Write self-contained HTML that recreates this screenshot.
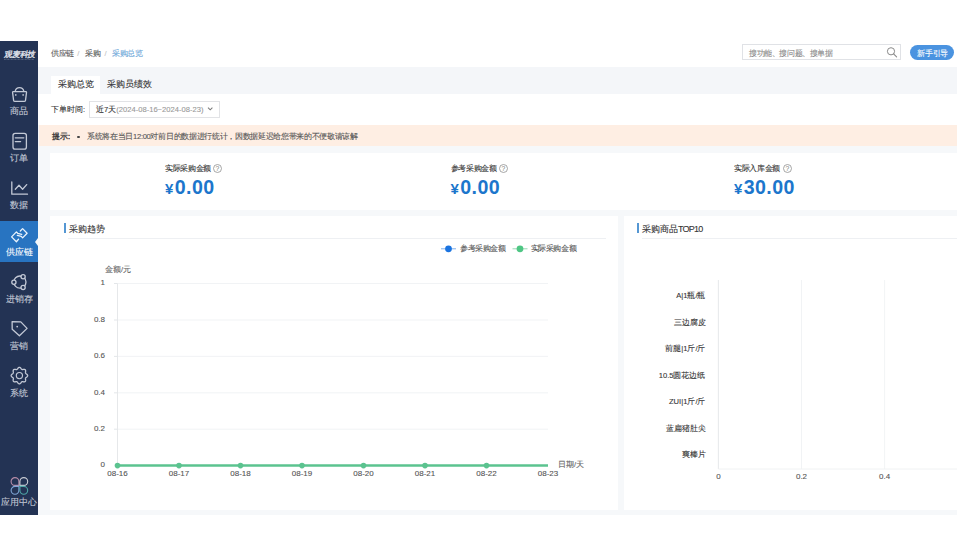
<!DOCTYPE html>
<html><head><meta charset="utf-8">
<style>
*{margin:0;padding:0;box-sizing:border-box}
html,body{width:957px;height:556px;overflow:hidden;background:#fff;font-family:"Liberation Sans",sans-serif;color:#333}
.t{position:absolute;white-space:nowrap;line-height:1;-webkit-text-stroke-width:0.1px}
.bx{position:absolute}
svg{position:absolute;overflow:visible}
.sl{left:0;width:38px;text-align:center;font-size:9px;color:#c3c9d6}
.yl{left:55px;width:50px;text-align:right;font-size:8px;color:#555}
.xl{width:40px;text-align:center;font-size:8px;color:#555}
.cl{left:605px;width:100.5px;text-align:right;font-size:7.6px;color:#333}
</style></head><body>
<!-- app frame -->
<div class="bx" style="left:0;top:41px;width:957px;height:474px;background:#f6f8fa"></div>
<!-- sidebar -->
<div class="bx" style="left:0;top:41px;width:38px;height:474px;background:#233354"></div>
<div class="bx" style="left:0;top:221px;width:38px;height:41px;background:#2874c1"></div>
<!-- header -->
<div class="bx" style="left:38px;top:41px;width:919px;height:26px;background:#fff"></div>
<div class="bx" style="left:38px;top:67px;width:919px;height:27px;background:#f4f6f9"></div>
<div class="bx" style="left:51px;top:76px;width:49px;height:18px;background:#fff"></div>
<div class="bx" style="left:38px;top:94px;width:919px;height:31px;background:#fff"></div>
<div class="bx" style="left:39px;top:124.7px;width:918px;height:21.8px;background:#feeee3"></div>
<!-- cards -->
<div class="bx" style="left:50.3px;top:153.3px;width:907px;height:56.4px;background:#fff"></div>
<div class="bx" style="left:50.3px;top:215.8px;width:567.7px;height:293.8px;background:#fff"></div>
<div class="bx" style="left:624px;top:215.8px;width:333px;height:293.8px;background:#fff"></div>

<!-- breadcrumb -->
<div class="t" style="left:51.3px;top:50px;font-size:7.6px;color:#555;letter-spacing:-0.5px">供应链</div>
<div class="t" style="left:77.3px;top:50px;font-size:7.6px;color:#c4c4c4">/</div>
<div class="t" style="left:85.2px;top:50px;font-size:7.6px;color:#555;letter-spacing:-0.5px">采购</div>
<div class="t" style="left:104.4px;top:50px;font-size:7.6px;color:#c4c4c4">/</div>
<div class="t" style="left:112.2px;top:50px;font-size:7.6px;color:#6aa5d8;letter-spacing:-0.5px">采购总览</div>
<!-- search -->
<div class="bx" style="left:742.2px;top:44.3px;width:158.4px;height:15.6px;border:1px solid #e0e2e6;background:#fff"></div>
<div class="t" style="left:749px;top:50px;font-size:7.6px;color:#8a8a8a;letter-spacing:-0.4px">搜功能、搜问题、搜单据</div>
<svg style="left:0;top:0" width="957" height="70" viewBox="0 0 957 70"><circle cx="891" cy="51.3" r="3.6" fill="none" stroke="#8a8a8a" stroke-width="1"/><line x1="893.6" y1="53.9" x2="896.6" y2="56.9" stroke="#8a8a8a" stroke-width="1.1" stroke-linecap="round"/></svg>
<div class="bx" style="left:910px;top:45px;width:44px;height:15px;border-radius:8px;background:#4a93e0"></div>
<div class="t" style="left:917.3px;top:49.8px;font-size:7.6px;color:#fff;letter-spacing:-0.35px">新手引导</div>

<!-- tabs -->
<div class="t" style="left:58px;top:80px;font-size:9px;color:#333">采购总览</div>
<div class="t" style="left:107px;top:80px;font-size:9px;color:#333">采购员绩效</div>

<!-- filter -->
<div class="t" style="left:51px;top:105.6px;font-size:7.6px;color:#333">下单时间:</div>
<div class="bx" style="left:89.2px;top:100.8px;width:131.3px;height:16.8px;border:1px solid #e2e3e6;background:#fff"></div>
<div class="t" style="left:96px;top:105.6px;font-size:7.6px;color:#333">近7天<span style="color:#999">(2024-08-16~2024-08-23)</span></div>
<svg style="left:0;top:0" width="957" height="130" viewBox="0 0 957 130"><polyline points="208,107.6 210.2,109.8 212.4,107.6" fill="none" stroke="#7a7a7a" stroke-width="1.05"/></svg>

<!-- notice -->
<div class="t" style="left:52px;top:133px;font-size:7.6px;color:#333;-webkit-text-stroke-width:0.3px">提示:</div>
<div class="bx" style="left:77.3px;top:135.8px;width:2.6px;height:2.6px;border-radius:50%;background:#444"></div>
<div class="t" style="left:87px;top:133.2px;font-size:7.6px;color:#555;letter-spacing:-0.32px">系统将在当日12:00对前日的数据进行统计，因数据延迟给您带来的不便敬请谅解</div>

<!-- stats -->
<div class="t" style="left:165px;top:164.8px;font-size:7.6px;color:#333;letter-spacing:-0.33px">实际采购金额</div>
<svg style="left:212.7px;top:163.5px" width="9" height="9" viewBox="0 0 9 9"><circle cx="4.5" cy="4.5" r="4" fill="none" stroke="#8a8a8a" stroke-width="0.75"/><text x="4.5" y="7.1" font-size="6.8" text-anchor="middle" fill="#7a7a7a" font-family="Liberation Sans">?</text></svg>
<div class="t" style="left:165px;top:178px;color:#1c76cc;font-weight:bold;-webkit-text-stroke-width:0"><span style="font-size:15px">¥</span><span style="font-size:19.6px;letter-spacing:0.45px;margin-left:1.3px">0.00</span></div>

<div class="t" style="left:450.5px;top:164.8px;font-size:7.6px;color:#333;letter-spacing:-0.33px">参考采购金额</div>
<svg style="left:498.7px;top:163.5px" width="9" height="9" viewBox="0 0 9 9"><circle cx="4.5" cy="4.5" r="4" fill="none" stroke="#8a8a8a" stroke-width="0.75"/><text x="4.5" y="7.1" font-size="6.8" text-anchor="middle" fill="#7a7a7a" font-family="Liberation Sans">?</text></svg>
<div class="t" style="left:450.5px;top:178px;color:#1c76cc;font-weight:bold;-webkit-text-stroke-width:0"><span style="font-size:15px">¥</span><span style="font-size:19.6px;letter-spacing:0.45px;margin-left:1.3px">0.00</span></div>

<div class="t" style="left:734px;top:164.8px;font-size:7.6px;color:#333;letter-spacing:-0.33px">实际入库金额</div>
<svg style="left:782.7px;top:163.5px" width="9" height="9" viewBox="0 0 9 9"><circle cx="4.5" cy="4.5" r="4" fill="none" stroke="#8a8a8a" stroke-width="0.75"/><text x="4.5" y="7.1" font-size="6.8" text-anchor="middle" fill="#7a7a7a" font-family="Liberation Sans">?</text></svg>
<div class="t" style="left:734px;top:178px;color:#1c76cc;font-weight:bold;-webkit-text-stroke-width:0"><span style="font-size:15px">¥</span><span style="font-size:19.6px;letter-spacing:0.45px;margin-left:1.3px">30.00</span></div>

<!-- left chart -->
<div class="bx" style="left:64px;top:223.3px;width:1.7px;height:9.5px;background:#5597d3"></div>
<div class="t" style="left:68.5px;top:224.6px;font-size:9px;color:#333">采购趋势</div>
<div class="bx" style="left:68px;top:238px;width:538px;height:1px;background:#eef0f3"></div>

<!-- right chart -->
<div class="bx" style="left:637px;top:223.3px;width:1.7px;height:9.5px;background:#5597d3"></div>
<div class="t" style="left:642px;top:224.6px;font-size:9px;color:#333">采购商品<span style="letter-spacing:-0.75px">TOP10</span></div>
<div class="bx" style="left:642px;top:238px;width:315px;height:1px;background:#eef0f3"></div>


<!-- sidebar content -->
<div class="t" style="left:3.8px;top:50.5px;font-size:8px;color:#e6e9f0;letter-spacing:-0.05px;transform:skewX(-10deg);-webkit-text-stroke-width:0.3px">观麦科技</div>
<svg style="left:0;top:0" width="38" height="70" viewBox="0 0 38 70"><line x1="4" y1="59.3" x2="34" y2="59.3" stroke="#8792a8" stroke-width="0.7" stroke-dasharray="0.8 0.6"/></svg>
<svg style="left:0;top:0" width="38" height="556" viewBox="0 0 38 556" fill="none" stroke="#c3c9d6" stroke-width="1.3" stroke-linecap="round" stroke-linejoin="round">
  <!-- bag -->
  <path d="M15.2 91.2 A4.4 4.6 0 0 1 23.8 91.2"/>
  <path d="M13 91.7 H26.1 Q26.6 91.7 26.5 92.6 L25.5 100.3 Q25.3 101.4 24.2 101.4 H14.9 Q13.8 101.4 13.6 100.3 L12.6 92.6 Q12.5 91.7 13 91.7 Z"/>
  <rect x="15" y="94.2" width="1.5" height="1.5" fill="#c3c9d6" stroke="none"/>
  <rect x="22.4" y="94.2" width="1.5" height="1.5" fill="#c3c9d6" stroke="none"/>
  <!-- doc -->
  <rect x="13" y="133.3" width="13.4" height="15.8" rx="2.2"/>
  <line x1="15.3" y1="137.8" x2="23.8" y2="137.8"/>
  <line x1="15.3" y1="141.6" x2="20.6" y2="141.6"/>
  <!-- chart -->
  <path d="M11.8 182 V194.2 H27.5"/>
  <path d="M15.3 189.2 L19 185.3 L22.6 189.2 L26.7 184.6"/>
  <!-- circles -->
  <circle cx="19.9" cy="282.1" r="6.1"/>
  <circle cx="13.9" cy="282.2" r="2.1" fill="#233354"/>
  <circle cx="23.1" cy="276.7" r="2.1" fill="#233354"/>
  <circle cx="23.1" cy="287.5" r="2.1" fill="#233354"/>
  <!-- tag -->
  <path d="M12.1 321.6 L20.8 321.9 L27.1 328.4 L19.4 335.8 L12.2 329.3 Z"/>
  <circle cx="17.2" cy="326.6" r="0.9" fill="#c3c9d6" stroke="none"/>
  <!-- gear -->
  <path d="M19.40 367.35 L19.62 367.37 L19.83 367.43 L20.04 367.53 L20.23 367.66 L20.42 367.82 L20.60 368.00 L20.77 368.19 L20.93 368.39 L21.08 368.60 L21.22 368.79 L21.36 368.97 L21.50 369.13 L21.64 369.27 L21.79 369.38 L21.94 369.46 L22.11 369.51 L22.29 369.54 L22.49 369.54 L22.70 369.52 L22.92 369.49 L23.16 369.46 L23.41 369.42 L23.67 369.39 L23.92 369.37 L24.18 369.37 L24.43 369.39 L24.66 369.44 L24.87 369.52 L25.07 369.63 L25.23 369.77 L25.37 369.93 L25.48 370.13 L25.56 370.34 L25.61 370.57 L25.63 370.82 L25.63 371.08 L25.61 371.33 L25.58 371.59 L25.54 371.84 L25.51 372.08 L25.48 372.30 L25.46 372.51 L25.46 372.71 L25.49 372.89 L25.54 373.06 L25.62 373.21 L25.73 373.36 L25.87 373.50 L26.03 373.64 L26.21 373.78 L26.40 373.92 L26.61 374.07 L26.81 374.23 L27.00 374.40 L27.18 374.58 L27.34 374.77 L27.47 374.96 L27.57 375.17 L27.63 375.38 L27.65 375.60 L27.63 375.82 L27.57 376.03 L27.47 376.24 L27.34 376.43 L27.18 376.62 L27.00 376.80 L26.81 376.97 L26.61 377.13 L26.40 377.28 L26.21 377.42 L26.03 377.56 L25.87 377.70 L25.73 377.84 L25.62 377.99 L25.54 378.14 L25.49 378.31 L25.46 378.49 L25.46 378.69 L25.48 378.90 L25.51 379.12 L25.54 379.36 L25.58 379.61 L25.61 379.87 L25.63 380.12 L25.63 380.38 L25.61 380.63 L25.56 380.86 L25.48 381.07 L25.37 381.27 L25.23 381.43 L25.07 381.57 L24.87 381.68 L24.66 381.76 L24.43 381.81 L24.18 381.83 L23.92 381.83 L23.67 381.81 L23.41 381.78 L23.16 381.74 L22.92 381.71 L22.70 381.68 L22.49 381.66 L22.29 381.66 L22.11 381.69 L21.94 381.74 L21.79 381.82 L21.64 381.93 L21.50 382.07 L21.36 382.23 L21.22 382.41 L21.08 382.60 L20.93 382.81 L20.77 383.01 L20.60 383.20 L20.42 383.38 L20.23 383.54 L20.04 383.67 L19.83 383.77 L19.62 383.83 L19.40 383.85 L19.18 383.83 L18.97 383.77 L18.76 383.67 L18.57 383.54 L18.38 383.38 L18.20 383.20 L18.03 383.01 L17.87 382.81 L17.72 382.60 L17.58 382.41 L17.44 382.23 L17.30 382.07 L17.16 381.93 L17.01 381.82 L16.86 381.74 L16.69 381.69 L16.51 381.66 L16.31 381.66 L16.10 381.68 L15.88 381.71 L15.64 381.74 L15.39 381.78 L15.13 381.81 L14.88 381.83 L14.62 381.83 L14.37 381.81 L14.14 381.76 L13.93 381.68 L13.73 381.57 L13.57 381.43 L13.43 381.27 L13.32 381.07 L13.24 380.86 L13.19 380.63 L13.17 380.38 L13.17 380.12 L13.19 379.87 L13.22 379.61 L13.26 379.36 L13.29 379.12 L13.32 378.90 L13.34 378.69 L13.34 378.49 L13.31 378.31 L13.26 378.14 L13.18 377.99 L13.07 377.84 L12.93 377.70 L12.77 377.56 L12.59 377.42 L12.40 377.28 L12.19 377.13 L11.99 376.97 L11.80 376.80 L11.62 376.62 L11.46 376.43 L11.33 376.24 L11.23 376.03 L11.17 375.82 L11.15 375.60 L11.17 375.38 L11.23 375.17 L11.33 374.96 L11.46 374.77 L11.62 374.58 L11.80 374.40 L11.99 374.23 L12.19 374.07 L12.40 373.92 L12.59 373.78 L12.77 373.64 L12.93 373.50 L13.07 373.36 L13.18 373.21 L13.26 373.06 L13.31 372.89 L13.34 372.71 L13.34 372.51 L13.32 372.30 L13.29 372.08 L13.26 371.84 L13.22 371.59 L13.19 371.33 L13.17 371.08 L13.17 370.82 L13.19 370.57 L13.24 370.34 L13.32 370.13 L13.43 369.93 L13.57 369.77 L13.73 369.63 L13.93 369.52 L14.14 369.44 L14.37 369.39 L14.62 369.37 L14.88 369.37 L15.13 369.39 L15.39 369.42 L15.64 369.46 L15.88 369.49 L16.10 369.52 L16.31 369.54 L16.51 369.54 L16.69 369.51 L16.86 369.46 L17.01 369.38 L17.16 369.27 L17.30 369.13 L17.44 368.97 L17.58 368.79 L17.72 368.60 L17.87 368.39 L18.03 368.19 L18.20 368.00 L18.38 367.82 L18.57 367.66 L18.76 367.53 L18.97 367.43 L19.18 367.37Z"/>
  <circle cx="19.4" cy="375.6" r="3.1" stroke-width="1.15"/>
</svg>
<!-- active arrows -->
<svg style="left:0;top:0" width="38" height="556" viewBox="0 0 38 556" fill="none" stroke="#eaf3fc" stroke-width="1.3" stroke-linecap="round" stroke-linejoin="round">
  <path d="M20.3 231 L22.6 228.6 L27.1 233.2 L22.6 237.9 L21.3 236.4 L17.3 235.4"/>
  <path d="M18.5 239.3 L16.4 241.7 L11.6 236.9 L16.4 231.9 L17.7 233.3 L21.7 234.3"/>
</svg>
<div class="bx" style="left:35px;top:237.5px;width:0;height:0;border-top:4px solid transparent;border-bottom:4px solid transparent;border-right:3.5px solid #f6f8fa"></div>
<!-- app center petals -->
<svg style="left:0;top:0" width="38" height="556" viewBox="0 0 38 556" fill="none" stroke-width="1.1">
  <path d="M18.9 485.4 H15 A3.9 3.9 0 1 1 18.9 481.5 Z" stroke="#b78da8"/>
  <path d="M19.9 485.4 V481.5 A3.9 3.9 0 1 1 23.8 485.4 Z" stroke="#c9ccd4"/>
  <path d="M18.9 486.4 V490.3 A3.9 3.9 0 1 1 15 486.4 Z" stroke="#7ea6d6"/>
  <path d="M19.9 486.4 H23.8 A3.9 3.9 0 1 1 19.9 490.3 Z" stroke="#4ea7a6"/>
</svg>
<div class="t sl" style="top:106.6px">商品</div>
<div class="t sl" style="top:153.6px">订单</div>
<div class="t sl" style="top:200.6px">数据</div>
<div class="t sl" style="top:247.6px;color:#fff">供应链</div>
<div class="t sl" style="top:294.6px">进销存</div>
<div class="t sl" style="top:341.6px">营销</div>
<div class="t sl" style="top:388.6px">系统</div>
<div class="t sl" style="top:498.1px">应用中心</div>
<!-- legend -->
<svg style="left:0;top:0" width="957" height="556" viewBox="0 0 957 556">
  <line x1="441" y1="248.8" x2="456" y2="248.8" stroke="#7fb0ec" stroke-width="1"/>
  <circle cx="448.5" cy="248.8" r="3.4" fill="#1b74e0"/>
  <line x1="512.5" y1="248.8" x2="527.5" y2="248.8" stroke="#96d8b2" stroke-width="1"/>
  <circle cx="520" cy="248.8" r="3.4" fill="#4fc684"/>
</svg>
<div class="t" style="left:460px;top:244.8px;font-size:7.6px;letter-spacing:-0.4px;color:#555">参考采购金额</div>
<div class="t" style="left:530.5px;top:244.8px;font-size:7.6px;letter-spacing:-0.4px;color:#555">实际采购金额</div>
<div class="t" style="left:105px;top:265.8px;font-size:7.6px;color:#666">金额/元</div>
<div class="t" style="left:558px;top:460.8px;font-size:7.6px;color:#666">日期/天</div>
<svg style="left:0;top:0" width="957" height="556" viewBox="0 0 957 556">
<line x1="117.5" y1="283.5" x2="548.0" y2="283.5" stroke="#eef0f2" stroke-width="0.8"/>
<line x1="114.0" y1="283.5" x2="117.5" y2="283.5" stroke="#dcdfe3" stroke-width="0.8"/>
<line x1="117.5" y1="320.0" x2="548.0" y2="320.0" stroke="#eef0f2" stroke-width="0.8"/>
<line x1="114.0" y1="320.0" x2="117.5" y2="320.0" stroke="#dcdfe3" stroke-width="0.8"/>
<line x1="117.5" y1="356.4" x2="548.0" y2="356.4" stroke="#eef0f2" stroke-width="0.8"/>
<line x1="114.0" y1="356.4" x2="117.5" y2="356.4" stroke="#dcdfe3" stroke-width="0.8"/>
<line x1="117.5" y1="392.8" x2="548.0" y2="392.8" stroke="#eef0f2" stroke-width="0.8"/>
<line x1="114.0" y1="392.8" x2="117.5" y2="392.8" stroke="#dcdfe3" stroke-width="0.8"/>
<line x1="117.5" y1="429.2" x2="548.0" y2="429.2" stroke="#eef0f2" stroke-width="0.8"/>
<line x1="114.0" y1="429.2" x2="117.5" y2="429.2" stroke="#dcdfe3" stroke-width="0.8"/>
<line x1="117.5" y1="283.5" x2="117.5" y2="465.6" stroke="#e3e5e8" stroke-width="0.9"/>
<line x1="117.5" y1="465.6" x2="548.0" y2="465.6" stroke="#5bc38f" stroke-width="2.5"/>
<circle cx="117.50" cy="465.6" r="2.8" fill="#5bc38f"/>
<circle cx="179.00" cy="465.6" r="2.8" fill="#5bc38f"/>
<circle cx="240.50" cy="465.6" r="2.8" fill="#5bc38f"/>
<circle cx="302.00" cy="465.6" r="2.8" fill="#5bc38f"/>
<circle cx="363.50" cy="465.6" r="2.8" fill="#5bc38f"/>
<circle cx="425.00" cy="465.6" r="2.8" fill="#5bc38f"/>
<circle cx="486.50" cy="465.6" r="2.8" fill="#5bc38f"/>
<line x1="801.50" y1="280" x2="801.50" y2="469" stroke="#eef0f2" stroke-width="0.8"/>
<line x1="884.60" y1="280" x2="884.60" y2="469" stroke="#eef0f2" stroke-width="0.8"/>
<line x1="967.70" y1="280" x2="967.70" y2="469" stroke="#eef0f2" stroke-width="0.8"/>
<line x1="718.4" y1="280" x2="718.4" y2="469" stroke="#e3e5e8" stroke-width="0.9"/>
<line x1="718.4" y1="469" x2="957" y2="469" stroke="#eef0f2" stroke-width="0.9"/>
</svg>
<div class="t yl" style="top:279.2px">1</div>
<div class="t yl" style="top:315.7px">0.8</div>
<div class="t yl" style="top:352.1px">0.6</div>
<div class="t yl" style="top:388.5px">0.4</div>
<div class="t yl" style="top:424.9px">0.2</div>
<div class="t yl" style="top:461.3px">0</div>
<div class="t xl" style="left:97.50px;top:470px">08-16</div>
<div class="t xl" style="left:159.00px;top:470px">08-17</div>
<div class="t xl" style="left:220.50px;top:470px">08-18</div>
<div class="t xl" style="left:282.00px;top:470px">08-19</div>
<div class="t xl" style="left:343.50px;top:470px">08-20</div>
<div class="t xl" style="left:405.00px;top:470px">08-21</div>
<div class="t xl" style="left:466.50px;top:470px">08-22</div>
<div class="t xl" style="left:528.00px;top:470px">08-23</div>
<div class="t cl" style="top:292.0px">A|1瓶/瓶</div>
<div class="t cl" style="top:318.5px">三边腐皮</div>
<div class="t cl" style="top:345.0px">前腿|1斤/斤</div>
<div class="t cl" style="top:371.6px">10.5圆花边纸</div>
<div class="t cl" style="top:398.2px">ZUI|1斤/斤</div>
<div class="t cl" style="top:424.8px">蓝扁猪肚尖</div>
<div class="t cl" style="top:451.4px">爽棒片</div>
<div class="t xl" style="left:698.40px;top:473px">0</div>
<div class="t xl" style="left:781.50px;top:473px">0.2</div>
<div class="t xl" style="left:864.60px;top:473px">0.4</div>
</body></html>
